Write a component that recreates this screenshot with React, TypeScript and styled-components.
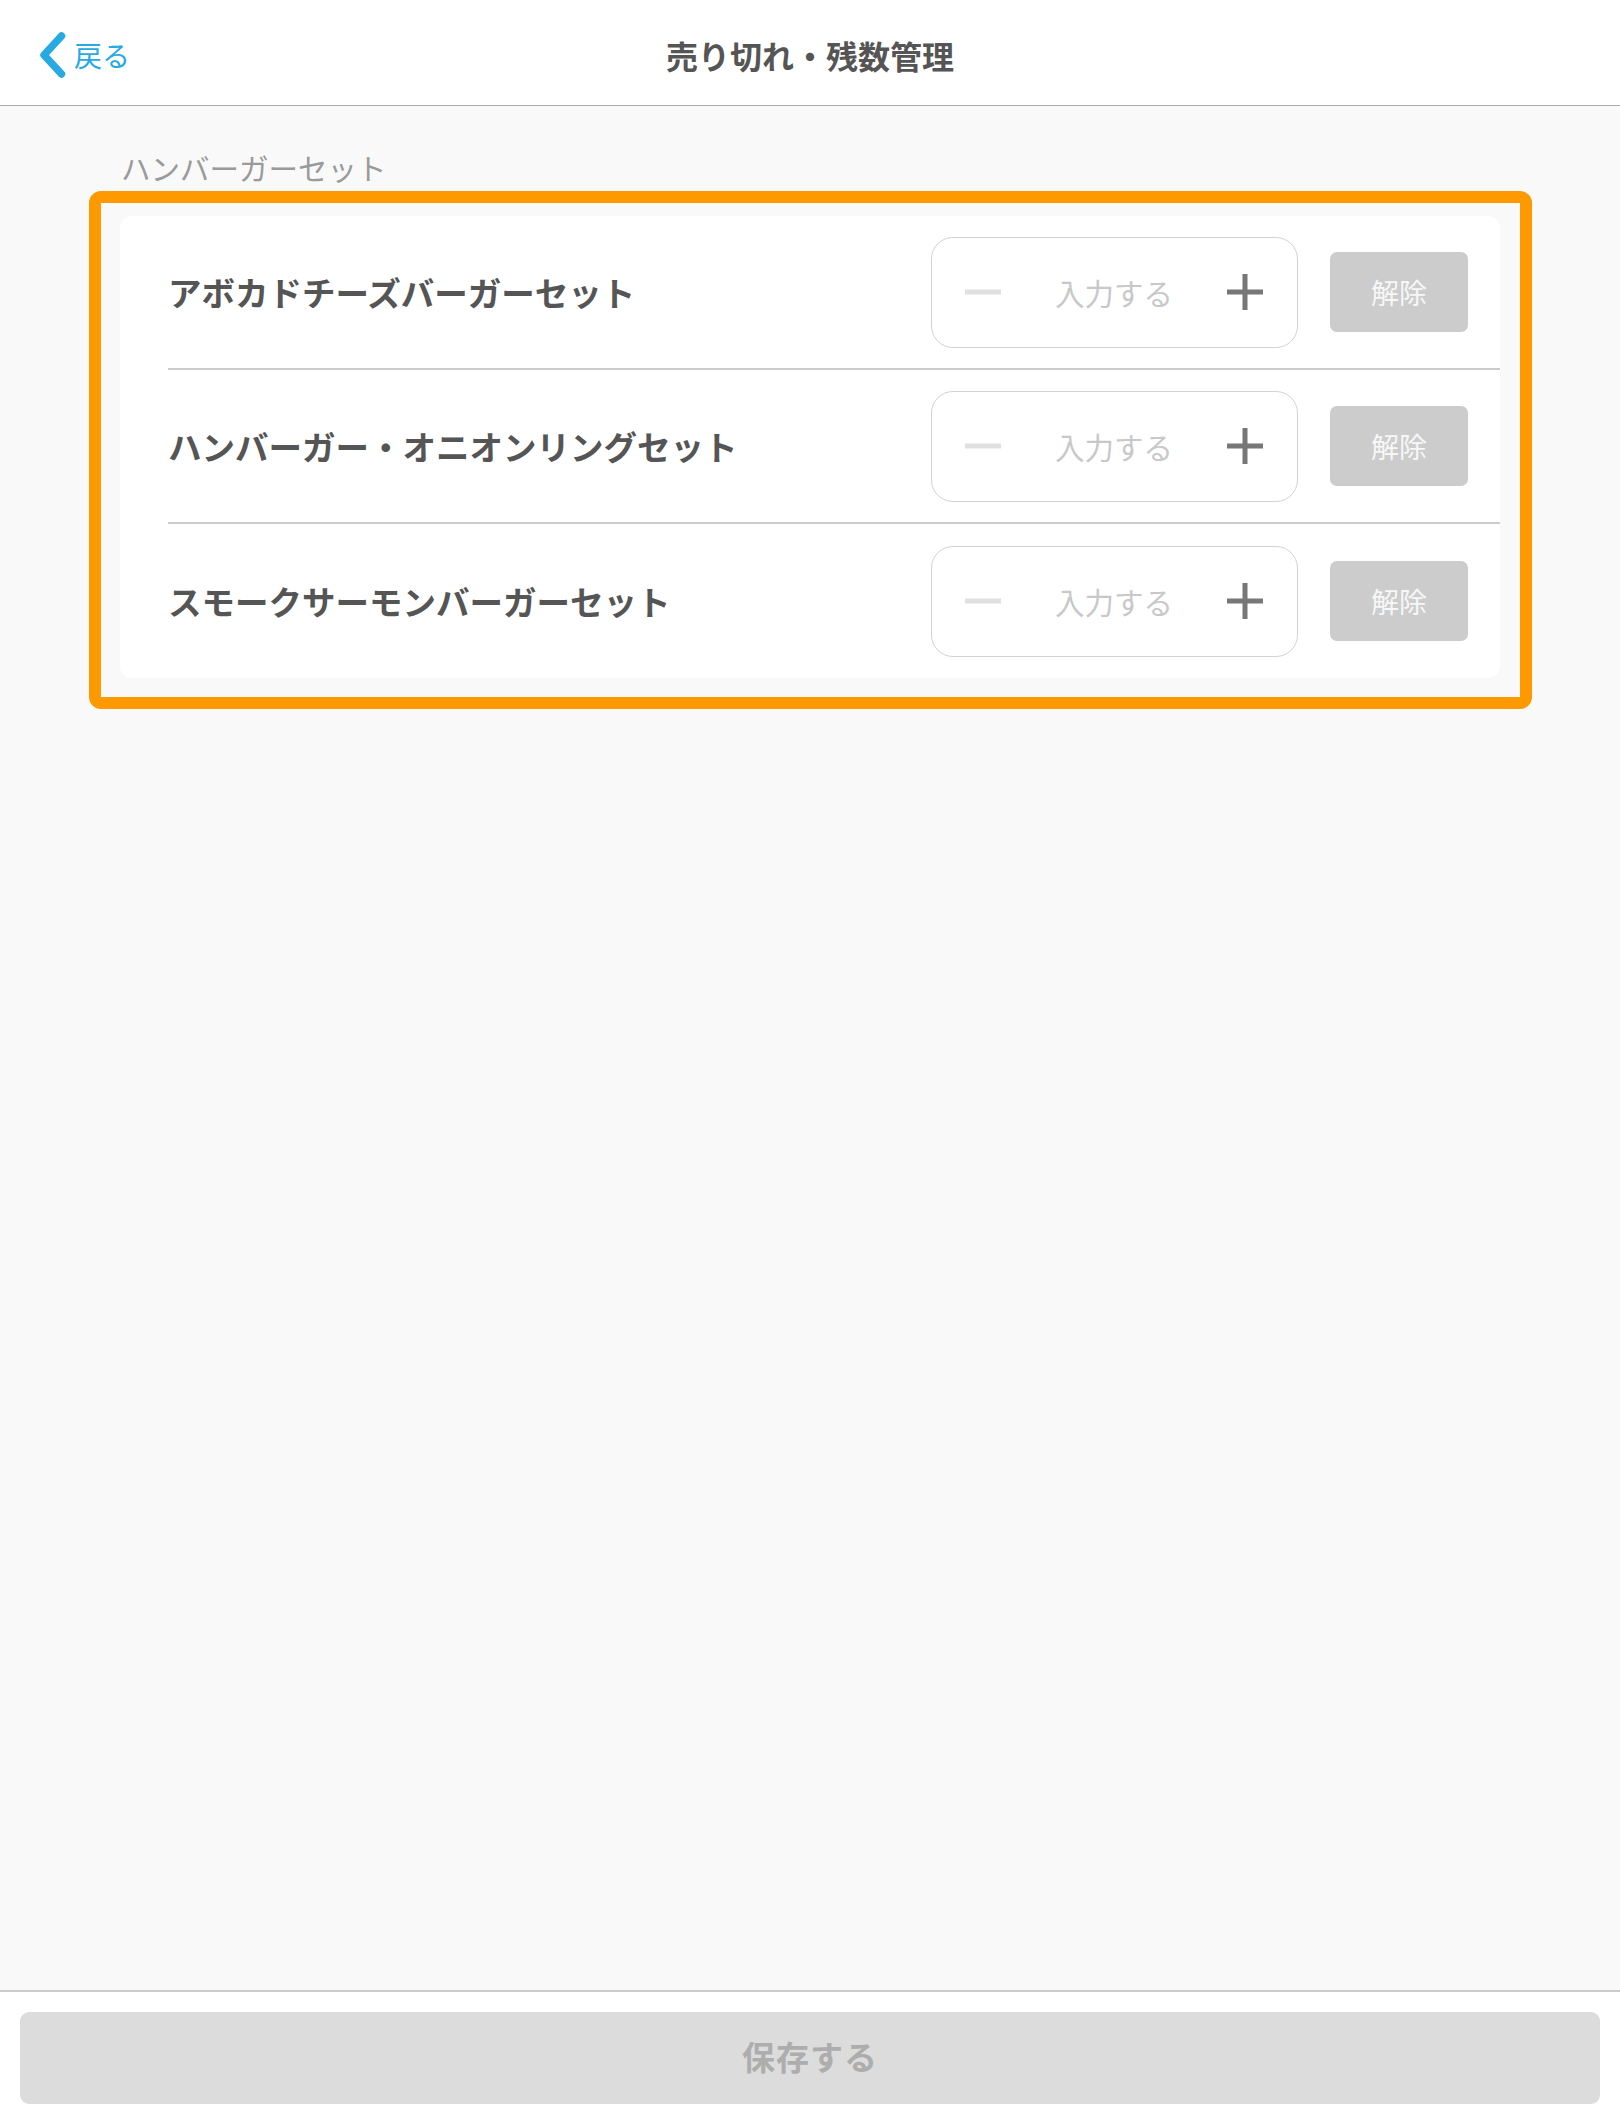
import React from "react";
import styled, { createGlobalStyle } from "styled-components";

const GlobalStyle = createGlobalStyle`
  html, body {
    margin: 0;
    padding: 0;
    background: #f9f9f9;
  }
  body {
    font-family: "Noto Sans CJK JP", "Noto Sans", sans-serif;
    -webkit-font-smoothing: antialiased;
  }
  * { box-sizing: border-box; }
`;

const Screen = styled.div`
  display: flex;
  flex-direction: column;
  min-height: 100vh;
  background: #f9f9f9;
`;

const Header = styled.header`
  display: grid;
  grid-template-columns: 1fr auto 1fr;
  align-items: center;
  height: 106px;
  padding-top: 4px;
  background: #ffffff;
  border-bottom: 1px solid #ababab;
`;

const BackLink = styled.a`
  display: flex;
  align-items: center;
  gap: 8px;
  padding-left: 40px;
  color: #27a9e1;
  font-size: 28px;
  line-height: 1;
  text-decoration: none;
  cursor: pointer;
  justify-self: start;
`;

const Title = styled.h1`
  margin: 0;
  font-size: 32px;
  font-weight: 700;
  line-height: 1;
  color: #555555;
`;

const Main = styled.main`
  flex: 1;
  padding: 47px 88px 0 89px;
`;

const SectionLabel = styled.div`
  padding-left: 32px;
  margin-bottom: 9px;
  font-size: 29.5px;
  line-height: 29px;
  color: #9a9a9a;
`;

const HighlightFrame = styled.div`
  border: 12px solid #ff9900;
  border-radius: 12px;
  padding: 13px 20px 19px 19px;
`;

const Card = styled.div`
  background: #ffffff;
  border-radius: 12px;
  overflow: hidden;
`;

const Row = styled.div<{ $last?: boolean }>`
  display: flex;
  align-items: center;
  margin-left: 48px;
  padding-right: 32px;
  height: 154px;
  border-bottom: ${(p) => (p.$last ? "none" : "2px solid #cccccc")};
`;

const ItemName = styled.div`
  flex: 1;
  font-size: 33.5px;
  font-weight: 700;
  line-height: 1;
  color: #555555;
`;

const Stepper = styled.div`
  display: flex;
  align-items: center;
  width: 367px;
  height: 111px;
  padding: 0 34px 0 33px;
  border: 1.5px solid #d2d2d2;
  border-radius: 22px;
  background: #ffffff;
`;

const StepButton = styled.button`
  display: flex;
  align-items: center;
  justify-content: center;
  width: 36px;
  height: 36px;
  padding: 0;
  border: none;
  background: transparent;
  cursor: pointer;
`;

const CountInput = styled.input`
  flex: 1;
  min-width: 0;
  border: none;
  outline: none;
  background: transparent;
  text-align: center;
  font-family: "Noto Sans CJK JP", "Noto Sans", sans-serif;
  font-size: 29.5px;
  color: #555555;
  &::placeholder {
    color: #c8c8c8;
  }
`;

const ReleaseButton = styled.button`
  margin-left: 32px;
  width: 138px;
  height: 80px;
  border: none;
  border-radius: 7px;
  background: #cccccc;
  color: #f7f7f7;
  font-family: "Noto Sans CJK JP", "Noto Sans", sans-serif;
  font-size: 28px;
  line-height: 1;
  cursor: pointer;
`;

const Footer = styled.footer`
  padding: 20px 20px 22px;
  background: #ffffff;
  border-top: 2px solid #cccccc;
`;

const SaveButton = styled.button`
  display: block;
  width: 100%;
  height: 92px;
  padding: 0 0 3px;
  border: none;
  border-radius: 9px;
  background: #dcdcdc;
  color: #adadad;
  font-family: "Noto Sans CJK JP", "Noto Sans", sans-serif;
  font-size: 33px;
  font-weight: 700;
  letter-spacing: 1px;
  line-height: 1;
`;

const Chevron = () => (
  <svg width="26" height="46" viewBox="0 0 26 46" aria-hidden="true">
    <path
      d="M21.5 4 L4 23 L21.5 42"
      fill="none"
      stroke="#27a9e1"
      strokeWidth="7.5"
      strokeLinecap="round"
      strokeLinejoin="round"
    />
  </svg>
);

const MinusIcon = () => (
  <svg width="36" height="36" viewBox="0 0 36 36" aria-hidden="true">
    <rect x="0" y="15.5" width="36" height="5" fill="#e0e0e0" />
  </svg>
);

const PlusIcon = () => (
  <svg width="36" height="36" viewBox="0 0 36 36" aria-hidden="true">
    <rect x="0" y="15.5" width="36" height="5" fill="#777777" />
    <rect x="15.5" y="0" width="5" height="36" fill="#777777" />
  </svg>
);

const items = [
  "アボカドチーズバーガーセット",
  "ハンバーガー・オニオンリングセット",
  "スモークサーモンバーガーセット",
];

export default function App() {
  return (
    <>
      <GlobalStyle />
      <Screen>
        <Header>
          <BackLink>
            <Chevron />
            <span>戻る</span>
          </BackLink>
          <Title>売り切れ・残数管理</Title>
          <div />
        </Header>
        <Main>
          <SectionLabel>ハンバーガーセット</SectionLabel>
          <HighlightFrame>
            <Card>
              {items.map((name, i) => (
                <Row key={name} $last={i === items.length - 1}>
                  <ItemName>{name}</ItemName>
                  <Stepper>
                    <StepButton aria-label="減らす">
                      <MinusIcon />
                    </StepButton>
                    <CountInput placeholder="入力する" />
                    <StepButton aria-label="増やす">
                      <PlusIcon />
                    </StepButton>
                  </Stepper>
                  <ReleaseButton>解除</ReleaseButton>
                </Row>
              ))}
            </Card>
          </HighlightFrame>
        </Main>
        <Footer>
          <SaveButton disabled>保存する</SaveButton>
        </Footer>
      </Screen>
    </>
  );
}
